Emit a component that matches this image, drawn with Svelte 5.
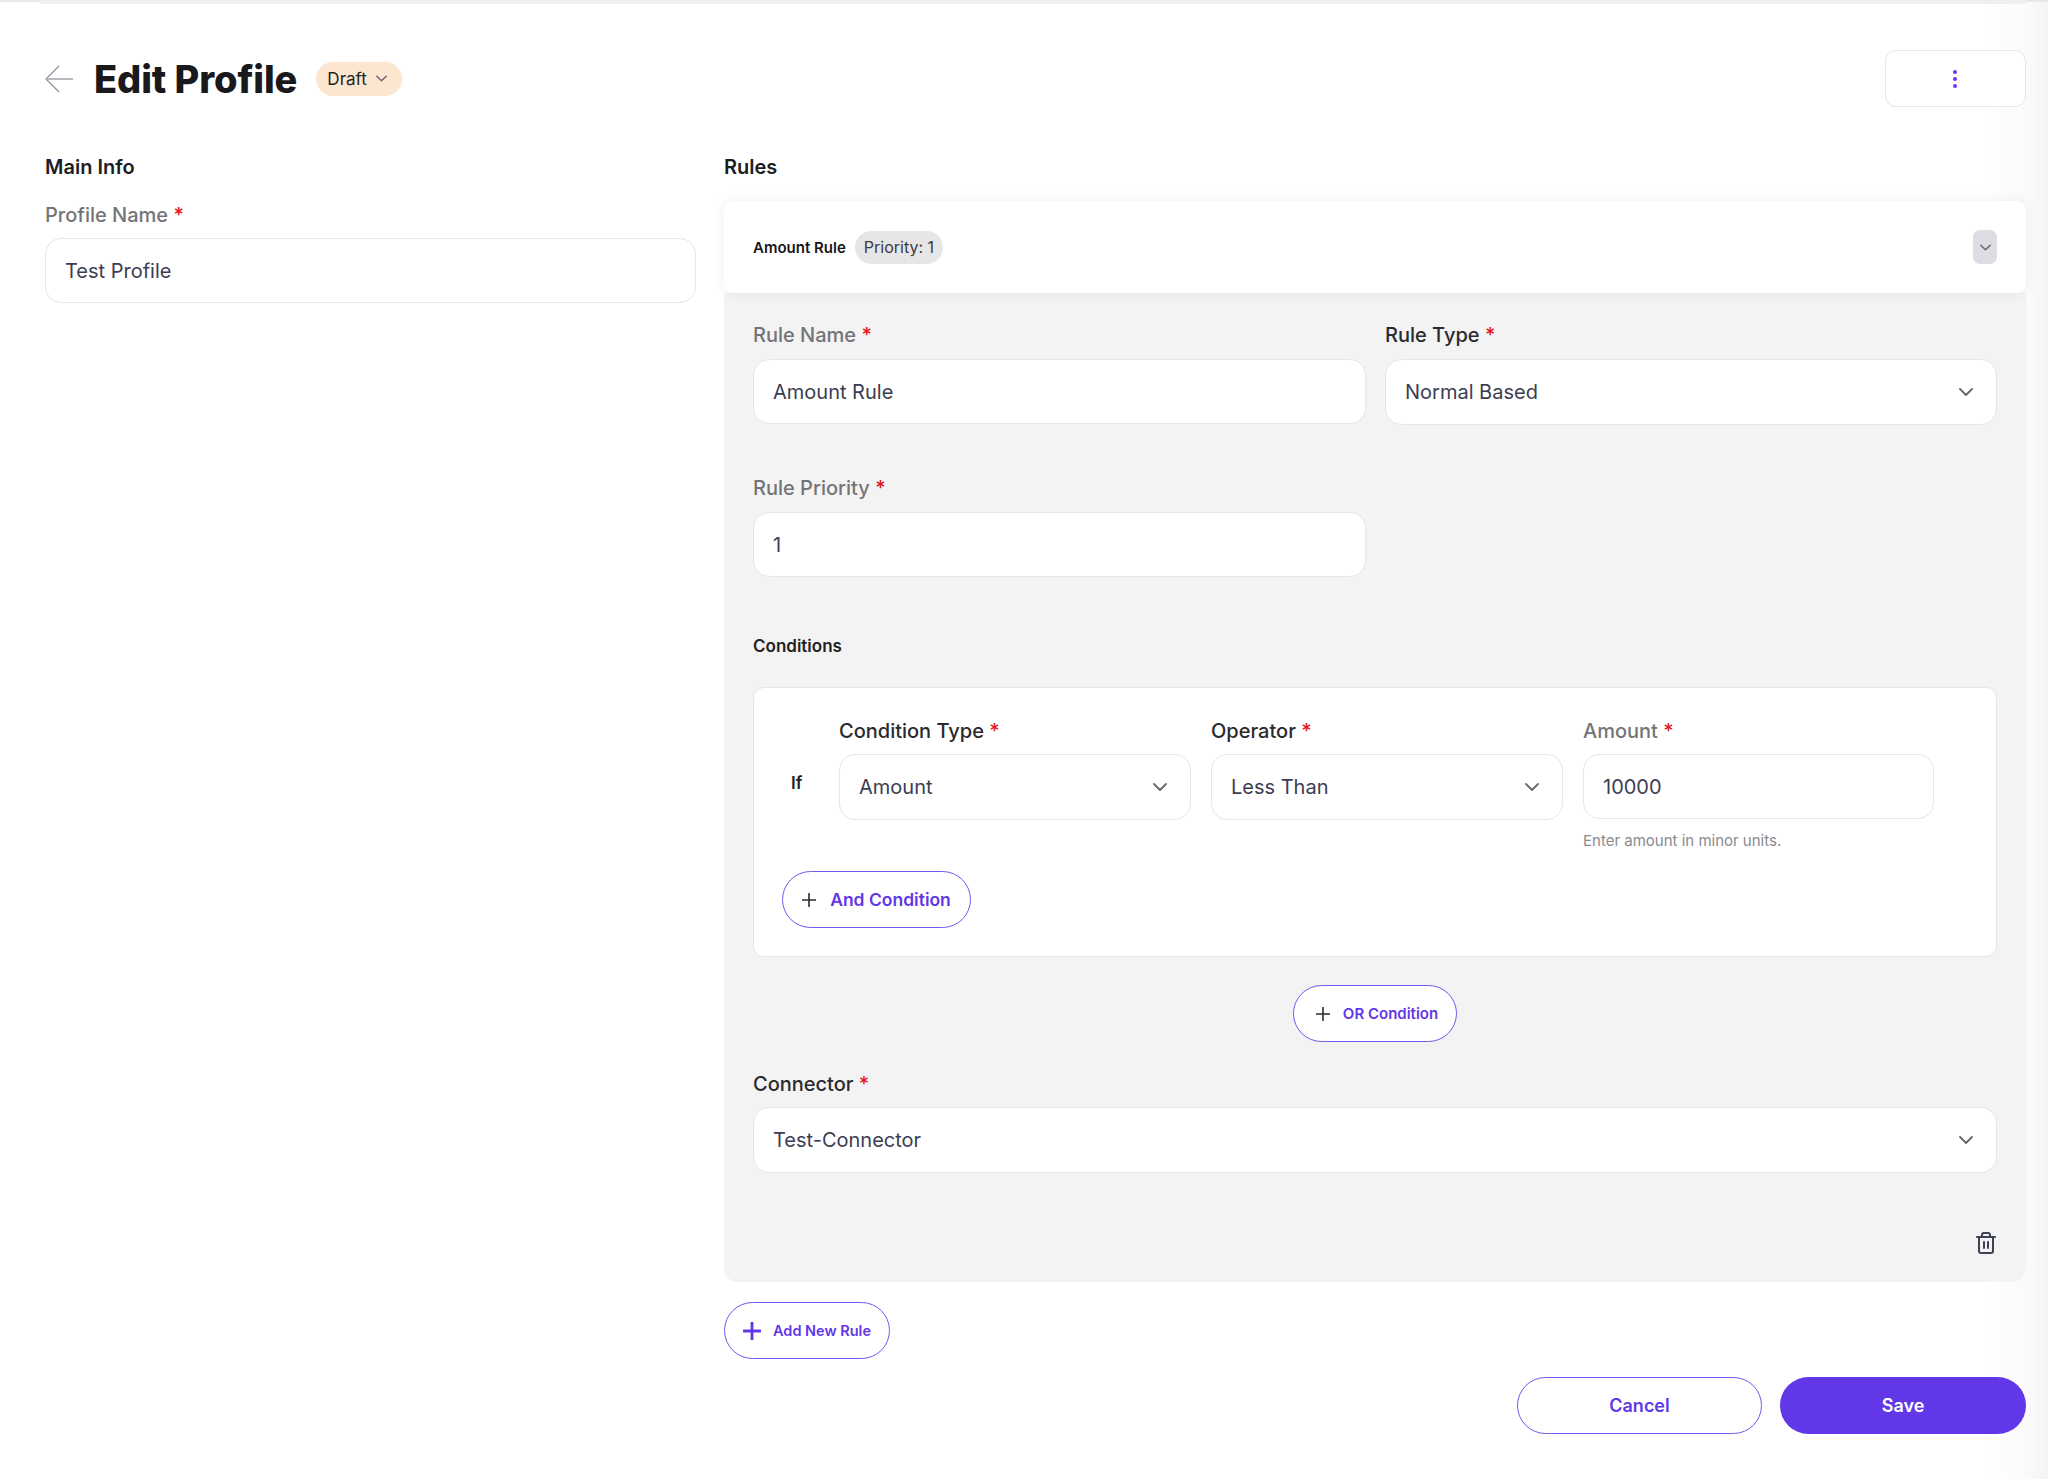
<script lang="ts">
  let status = $state("Draft");
  let profileName = $state("Test Profile");
  let rule = $state({
    name: "Amount Rule",
    type: "Normal Based",
    priority: "1",
    connector: "Test-Connector",
  });
  let condition = $state({ type: "Amount", operator: "Less Than", amount: "10000" });
</script>

{#snippet chevron(w = 14, h = 8)}
  <svg class="chevron" width={w} height={h} viewBox="0 0 14 8" fill="none">
    <path d="M1 1l6 6 6-6" stroke="currentColor" stroke-width="1.8" stroke-linecap="round" stroke-linejoin="round" />
  </svg>
{/snippet}

{#snippet plus(size = 14, color = "#2b2b33", weight = 1.6)}
  <svg width={size} height={size} viewBox="0 0 14 14" fill="none">
    <path d="M7 0.5v13M0.5 7h13" stroke={color} stroke-width={weight} stroke-linecap="round" />
  </svg>
{/snippet}

{#snippet fieldLabel(text, tone = "")}
  <div class="label {tone}">{text} <span class="req">*</span></div>
{/snippet}

{#snippet select(value)}
  <button type="button" class="control select">
    <span>{value}</span>
    {@render chevron()}
  </button>
{/snippet}

<div class="topline"><div class="topline-inner"></div></div>

<main class="page">
  <header class="page-head">
    <div class="title-group">
      <svg class="back" width="28" height="28" viewBox="0 0 28 28" fill="none">
        <path d="M14 1L1 14l13 13" stroke="#8d8f9b" stroke-width="1.2" />
        <path d="M1 14h27" stroke="#a6a8b2" stroke-width="1.6" />
      </svg>
      <h1>Edit Profile</h1>
      <button type="button" class="status">
        {status}
        {@render chevron(11, 7)}
      </button>
    </div>
    <button type="button" class="more" aria-label="More">
      <span></span><span></span><span></span>
    </button>
  </header>

  <div class="columns">
    <section class="main-info">
      <h2>Main Info</h2>
      {@render fieldLabel("Profile Name", "muted")}
      <div class="control">{profileName}</div>
    </section>

    <section>
      <h2>Rules</h2>
      <div class="rule-head">
        <span class="rule-name">{rule.name}</span>
        <span class="priority">Priority: {rule.priority}</span>
        <button type="button" class="collapse" aria-label="Collapse">{@render chevron(11, 7)}</button>
      </div>

      <div class="rule-body">
        <div class="two-col">
          <div>
            {@render fieldLabel("Rule Name", "muted")}
            <div class="control">{rule.name}</div>
          </div>
          <div>
            {@render fieldLabel("Rule Type")}
            {@render select(rule.type)}
          </div>
        </div>

        <div class="two-col priority-row">
          <div>
            {@render fieldLabel("Rule Priority", "muted")}
            <div class="control">{rule.priority}</div>
          </div>
        </div>

        <h3>Conditions</h3>
        <div class="condition-card">
          <div class="condition-row">
            <span class="if">If</span>
            <div>
              {@render fieldLabel("Condition Type")}
              {@render select(condition.type)}
            </div>
            <div>
              {@render fieldLabel("Operator")}
              {@render select(condition.operator)}
            </div>
            <div>
              {@render fieldLabel("Amount", "muted")}
              <div class="control">{condition.amount}</div>
              <p class="hint">Enter amount in minor units.</p>
            </div>
          </div>
          <button type="button" class="pill and">
            {@render plus()}
            <span>And Condition</span>
          </button>
        </div>

        <div class="or-wrap">
          <button type="button" class="pill or">
            {@render plus()}
            <span>OR Condition</span>
          </button>
        </div>

        {@render fieldLabel("Connector")}
        {@render select(rule.connector)}

        <div class="rule-foot">
          <button type="button" class="trash" aria-label="Delete rule">
            <svg width="20" height="22" viewBox="0 0 20 22" fill="none" stroke="#3e4054" stroke-width="2" stroke-linecap="round" stroke-linejoin="round">
              <path d="M1 5h18" />
              <path d="M6 5V3a2 2 0 0 1 2-2h4a2 2 0 0 1 2 2v2" />
              <path d="M3 5v14a2 2 0 0 0 2 2h10a2 2 0 0 0 2-2V5" />
              <path d="M8 10v6M12 10v6" />
            </svg>
          </button>
        </div>
      </div>

      <button type="button" class="pill add">
        {@render plus(18, "#6237e8", 2.2)}
        <span>Add New Rule</span>
      </button>

      <div class="actions">
        <button type="button" class="pill cancel">Cancel</button>
        <button type="button" class="save">Save</button>
      </div>
    </section>
  </div>
</main>

<style>
  :global(body) {
    margin: 0;
    min-height: 1479px;
    font-family: Inter, "Noto Sans", sans-serif;
    color: #1d1d1f;
    background: linear-gradient(to right, #fff 1985px, #fafafa 2030px, #f4f4f4 2048px);
  }

  button {
    font-family: inherit;
    cursor: pointer;
  }

  .topline {
    height: 2px;
    background: #e9e9ea;
  }

  .topline-inner {
    height: 4px;
    margin-left: 40px;
    width: 1986px;
    background: #efeff0;
  }

  .page {
    width: 1981px;
    margin-left: 45px;
  }

  .page-head {
    display: flex;
    align-items: center;
    justify-content: space-between;
    padding-top: 48px;
    height: 57px;
  }

  .title-group {
    display: flex;
    align-items: center;
  }

  .back {
    margin-right: 21px;
  }

  h1 {
    margin: 0;
    font-size: 38px;
    font-weight: 800;
    letter-spacing: -0.1px;
    color: #19191b;
  }

  .status {
    display: flex;
    align-items: center;
    gap: 9px;
    height: 34px;
    margin-left: 19px;
    padding: 0 15px 0 11px;
    border: none;
    border-radius: 17px;
    background: #fde6d0;
    font-size: 17px;
    color: #232323;
  }

  .more {
    display: flex;
    flex-direction: column;
    align-items: center;
    justify-content: center;
    gap: 3px;
    width: 141px;
    height: 57px;
    padding: 0 2px 0 0;
    background: #fff;
    border: 1.5px solid #e6e6e8;
    border-radius: 11px;
  }

  .more span {
    width: 4px;
    height: 4px;
    border-radius: 50%;
    background: #6a35ff;
  }

  .columns {
    display: grid;
    grid-template-columns: 651px 1fr;
    gap: 28px;
    margin-top: 47px;
  }

  h2 {
    margin: 0 0 20px;
    font-size: 20px;
    line-height: 27px;
    font-weight: 600;
    color: #1d1d1f;
  }

  .main-info h2 {
    margin-bottom: 21px;
  }

  h3 {
    margin: 58px 0 30px;
    font-size: 17px;
    line-height: 22px;
    font-weight: 600;
    color: #222;
  }

  .label {
    margin-bottom: 10px;
    font-size: 20px;
    line-height: 26px;
    font-weight: 500;
    color: #2a2a2e;
  }

  .label.muted {
    color: #747478;
  }

  .two-col .label {
    margin-bottom: 11px;
  }

  .req {
    color: #e3171c;
  }

  .control {
    box-sizing: border-box;
    display: flex;
    align-items: center;
    height: 65px;
    padding: 0 19px;
    background: #fff;
    border: 1.5px solid #e6e6e9;
    border-radius: 16px;
    font-size: 20px;
    color: #3c3d52;
  }

  .select {
    justify-content: space-between;
    width: 100%;
    height: 66px;
    padding-right: 23px;
    text-align: left;
  }

  .chevron {
    flex-shrink: 0;
    color: #66666c;
  }

  .rule-head {
    display: flex;
    align-items: center;
    height: 92px;
    padding: 0 29px;
    background: #fff;
    border-radius: 10px;
    box-shadow: 0 0 14px rgba(40, 40, 70, 0.07);
    position: relative;
  }

  .rule-name {
    font-size: 15px;
    font-weight: 600;
    color: #17171a;
  }

  .priority {
    margin-left: 9px;
    padding: 0 9px;
    height: 33px;
    line-height: 33px;
    border-radius: 17px;
    background: #e6e6e7;
    font-size: 16px;
    color: #3a3a3e;
  }

  .collapse {
    display: flex;
    align-items: center;
    justify-content: center;
    margin-left: auto;
    width: 24px;
    height: 34px;
    padding: 0;
    border: none;
    border-radius: 7px;
    background: #dcdce2;
  }

  .rule-body {
    padding: 29px 29px 29px 29px;
    background: #f3f3f4;
    border-radius: 0 0 14px 14px;
  }

  .two-col {
    display: grid;
    grid-template-columns: 613px 612px;
    gap: 19px;
  }

  .priority-row {
    margin-top: 50px;
  }

  .condition-card {
    height: 270px;
    box-sizing: border-box;
    padding: 30px 29px 0 28px;
    background: #fff;
    border: 1.5px solid #e6e6e9;
    border-radius: 11px;
  }

  .condition-row {
    display: grid;
    grid-template-columns: 37px 352px 352px 351px;
    column-gap: 20px;
    height: 153px;
  }

  .if {
    align-self: start;
    margin-top: 55px;
    padding-left: 9px;
    font-size: 17px;
    font-weight: 600;
    color: #222;
  }

  .hint {
    margin: 12px 0 0;
    font-size: 15px;
    line-height: 20px;
    color: #8a8a8f;
  }

  .pill {
    display: inline-flex;
    align-items: center;
    justify-content: center;
    box-sizing: border-box;
    height: 57px;
    background: #fff;
    border: 1.5px solid #7a55ee;
    border-radius: 29px;
    color: #6237e8;
    font-weight: 600;
    padding: 0;
  }

  .and {
    width: 189px;
    gap: 14px;
    font-size: 17.5px;
  }

  .or-wrap {
    display: flex;
    justify-content: center;
    margin: 28px 0 29px;
  }

  .or {
    width: 164px;
    gap: 13px;
    padding-left: 4px;
    font-size: 15px;
  }

  .rule-foot {
    display: flex;
    justify-content: flex-end;
    margin-top: 59px;
    padding-right: 1px;
    height: 21px;
  }

  .trash {
    padding: 0;
    border: none;
    background: none;
    line-height: 0;
  }

  .add {
    width: 166px;
    gap: 12px;
    margin-top: 20px;
    font-size: 14.5px;
  }

  .actions {
    display: flex;
    justify-content: flex-end;
    gap: 18px;
    margin-top: 18px;
  }

  .cancel,
  .save {
    width: 245px;
    height: 57px;
    font-size: 18px;
    font-weight: 600;
  }

  .save {
    width: 246px;
    border: none;
    border-radius: 29px;
    background: #6237e8;
    color: #fff;
  }
</style>
